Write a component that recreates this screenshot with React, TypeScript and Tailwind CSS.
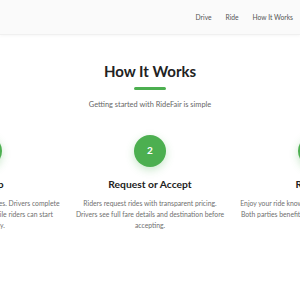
const steps = [
  {
    n: "1",
    title: "Sign Up",
    text: "Create your account in minutes. Drivers complete background verification while riders can start immediately.",
  },
  {
    n: "2",
    title: "Request or Accept",
    text: "Riders request rides with transparent pricing. Drivers see full fare details and destination before accepting.",
  },
  {
    n: "3",
    title: "Ride On",
    text: "Enjoy your ride knowing you're paying a fair price. Both parties benefit from lower commission fees.",
  },
];

export default function App() {
  return (
    <div className="min-h-[300px] w-[300px] overflow-hidden bg-white font-['Lato',sans-serif]">
      <header className="flex h-[35px] items-center justify-end gap-[14px] border-b border-[#f0f0f0] bg-[#fafafa] pr-[7px] shadow-[0_1px_3px_rgba(0,0,0,0.04)]">
        <a className="text-[6.7px] text-[#555]">Drive</a>
        <a className="text-[6.7px] text-[#555]">Ride</a>
        <a className="text-[6.7px] text-[#555]">How It Works</a>
      </header>

      <section className="flex flex-col items-center pt-[28px]">
        <h2 className="text-[15px] font-bold leading-[16px] text-[#222]">How It Works</h2>
        <div className="mt-[8px] h-[2.5px] w-[32px] rounded-full bg-[#4caf50]" />
        <p className="mt-[9px] text-[7.4px] text-[#666]">Getting started with RideFair is simple</p>

        <div className="mt-[25px] flex w-full justify-center gap-[14px]">
          {steps.map((s) => (
            <div key={s.n} className="flex w-[150px] shrink-0 flex-col items-center text-center">
              <div className="flex h-[32px] w-[32px] items-center justify-center rounded-full bg-[#4caf50] text-[10px] font-bold text-white shadow-[0_3px_8px_rgba(76,175,80,0.3)]">
                {s.n}
              </div>
              <h3 className="mt-[11px] whitespace-nowrap text-[10.3px] font-bold leading-[13px] text-[#222]">{s.title}</h3>
              <p className="mt-[7px] text-[6.8px] leading-[11px] text-[#6f6f6f]">{s.text}</p>
            </div>
          ))}
        </div>
      </section>
    </div>
  );
}
